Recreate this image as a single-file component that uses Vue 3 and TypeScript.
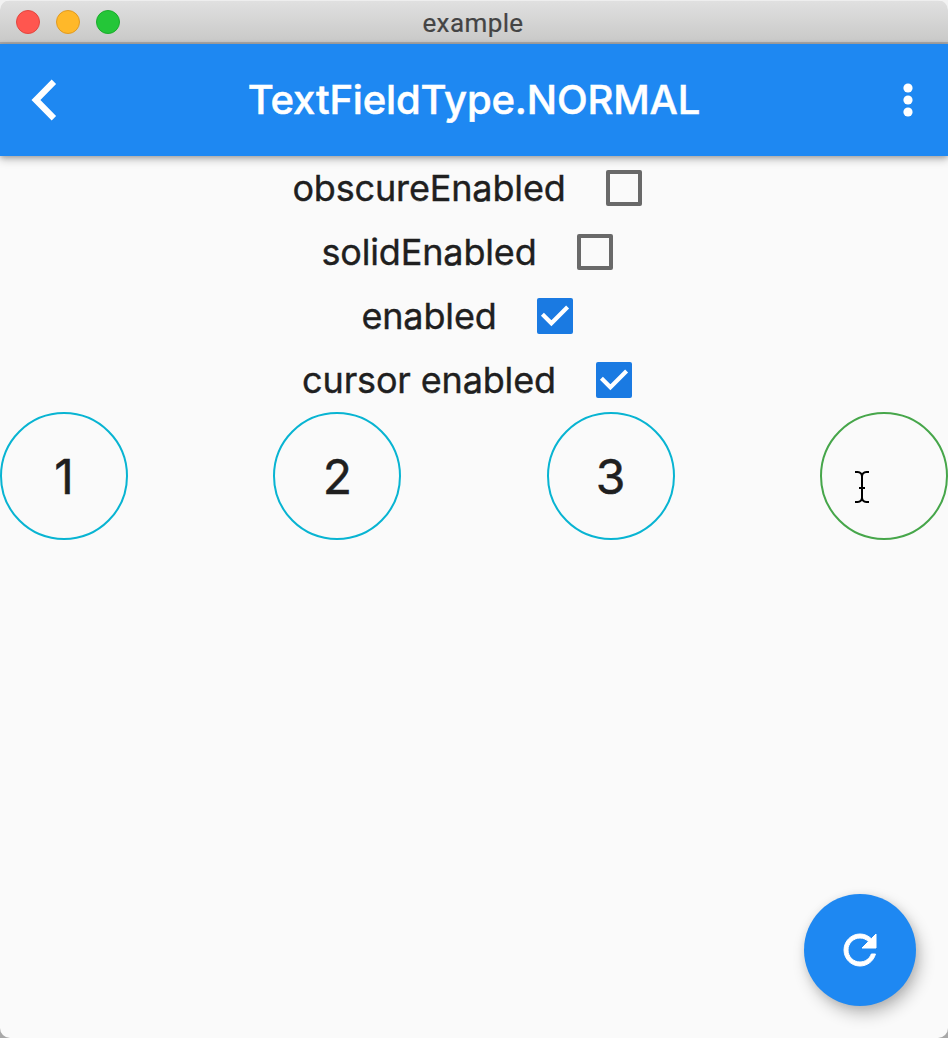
<script setup lang="ts">
import { ref } from 'vue'

interface Option {
  id: string
  label: string
  checked: boolean
}

interface PinCell {
  value: string
  active: boolean
}

const options = ref<Option[]>([
  { id: 'obscure', label: 'obscureEnabled', checked: false },
  { id: 'solid', label: 'solidEnabled', checked: false },
  { id: 'enabled', label: 'enabled', checked: true },
  { id: 'cursor', label: 'cursor enabled', checked: true },
])

const cells: PinCell[] = [
  { value: '1', active: false },
  { value: '2', active: false },
  { value: '3', active: false },
  { value: '', active: true },
]
</script>

<template>
  <div class="desktop">
    <div class="window">
      <header class="titlebar">
        <div class="lights">
          <span class="light close"></span>
          <span class="light minimize"></span>
          <span class="light zoom"></span>
        </div>
        <span class="window-title">example</span>
      </header>

      <nav class="appbar">
        <button class="icon-button" aria-label="Back">
          <svg width="48" height="48" viewBox="0 0 24 24">
            <path d="M12.05 3.95 9.85 1.75-.25 12l10.1 10.25 2.2-2.2L4.2 12z" fill="#fff" />
          </svg>
        </button>
        <h1 class="title">TextFieldType.NORMAL</h1>
        <button class="icon-button" aria-label="More">
          <svg width="48" height="48" viewBox="0 0 48 48" fill="#fff">
            <circle cx="24" cy="12" r="4.6" />
            <circle cx="24" cy="24" r="4.6" />
            <circle cx="24" cy="36" r="4.6" />
          </svg>
        </button>
      </nav>

      <main class="content">
        <div v-for="option in options" :key="option.id" class="option">
          <span class="label">{{ option.label }}</span>
          <button
            class="checkbox"
            :class="{ checked: option.checked }"
            role="checkbox"
            :aria-checked="option.checked"
            @click="option.checked = !option.checked"
          >
            <svg v-if="option.checked" width="36" height="36" viewBox="0 0 36 36">
              <path d="M5.4 16.2 14.4 25.2 30.6 9" fill="none" stroke="#fff" stroke-width="4.2" />
            </svg>
          </button>
        </div>

        <div class="cells">
          <div v-for="(cell, i) in cells" :key="i" class="cell" :class="{ active: cell.active }">
            {{ cell.value }}
            <svg v-if="cell.active" class="ibeam" width="16" height="34" viewBox="0 0 16 34">
              <path
                d="M1 2H3.5Q8 2.5 8 6.5Q8 2.5 12.5 2H15M8 5V29M1 32H3.5Q8 31.5 8 27.5Q8 31.5 12.5 32H15M5 18H11"
                fill="none"
                stroke="#000"
                stroke-width="2"
              />
            </svg>
          </div>
        </div>
      </main>

      <button class="fab" aria-label="Refresh">
        <svg width="48" height="48" viewBox="0 0 24 24">
          <path
            d="M17.65 6.35C16.2 4.9 14.21 4 12 4c-4.42 0-7.99 3.58-7.99 8s3.57 8 7.99 8c3.73 0 6.84-2.55 7.73-6h-2.08c-.82 2.33-3.04 4-5.65 4-3.31 0-6-2.69-6-6s2.69-6 6-6c1.66 0 3.14.69 4.22 1.78L13 11h7V4l-2.35 2.35z"
            fill="#fff"
            stroke="#fff"
            stroke-width="0.5"
          />
        </svg>
      </button>
    </div>
  </div>
</template>

<style>
body {
  margin: 0;
}
</style>

<style scoped>
.desktop {
  width: 948px;
  height: 1038px;
  background: linear-gradient(#f2f2f2 50%, #a8a8a8 50%);
  font-family: Inter, 'Liberation Sans', sans-serif;
}

.window {
  position: relative;
  display: flex;
  flex-direction: column;
  height: 100%;
  overflow: hidden;
  border-radius: 10px;
  background: #fafafa;
}

button {
  padding: 0;
  border: 0;
  background: none;
}

svg {
  display: block;
  overflow: visible;
}

.titlebar {
  display: grid;
  grid-template-columns: 1fr auto 1fr;
  align-items: center;
  box-sizing: border-box;
  height: 44px;
  padding: 0 16px;
  border-top: 1px solid #eeeeee;
  border-bottom: 2px solid #aaa9a9;
  background: linear-gradient(#e0e0e0, #c9c9c8);
}

.lights {
  display: flex;
  gap: 16px;
  padding-top: 1px;
}

.light {
  box-sizing: border-box;
  width: 24px;
  height: 24px;
  border: 1px solid;
  border-radius: 50%;
}

.close {
  border-color: #e2463f;
  background: #ff564f;
}

.minimize {
  border-color: #e09a22;
  background: #ffb829;
}

.zoom {
  border-color: #1bac2c;
  background: #24c638;
}

.window-title {
  margin-left: -2px;
  padding-top: 2px;
  color: #444;
  font-family: Roboto, sans-serif;
  font-size: 26px;
  line-height: 30px;
  letter-spacing: 0.4px;
  -webkit-text-stroke: 0.2px #444;
}

.appbar {
  position: relative;
  display: flex;
  align-items: center;
  justify-content: space-between;
  box-sizing: border-box;
  height: 112px;
  padding: 0 16px 0 32px;
  background: #1e88f2;
  box-shadow: 0 4px 8px rgba(0, 0, 0, 0.22), 0 1px 5px rgba(0, 0, 0, 0.22);
}

.title {
  margin: 0 0 0 -16px;
  color: #fff;
  font-size: 40px;
  font-weight: 500;
  line-height: 48px;
  letter-spacing: -0.15px;
  white-space: nowrap;
  -webkit-text-stroke: 0.5px #fff;
}

.content {
  flex: 1;
}

.option {
  display: flex;
  align-items: center;
  justify-content: center;
  height: 64px;
  padding-right: 14px;
}

.label {
  margin-right: 40px;
  color: #1f1f1f;
  font-size: 36px;
  line-height: 44px;
  letter-spacing: -0.15px;
  white-space: nowrap;
  -webkit-text-stroke: 0.4px #1f1f1f;
}

.checkbox {
  box-sizing: border-box;
  width: 36px;
  height: 36px;
  border: 4px solid #696969;
  border-radius: 2px;
}

.checkbox.checked {
  border: 0;
  background: #1a7ae2;
}

.cells {
  display: flex;
  justify-content: space-between;
}

.cell {
  position: relative;
  display: flex;
  align-items: center;
  justify-content: center;
  box-sizing: border-box;
  width: 128px;
  height: 128px;
  padding-top: 2px;
  border: 2px solid #08b4d2;
  border-radius: 50%;
  color: #1f1f1f;
  font-size: 48px;
  line-height: 56px;
  -webkit-text-stroke: 0.5px #1f1f1f;
}

.cell.active {
  border-color: #46a64a;
}

.ibeam {
  position: absolute;
  top: 56px;
  left: 32px;
}

.fab {
  position: absolute;
  right: 32px;
  bottom: 32px;
  display: flex;
  align-items: center;
  justify-content: center;
  width: 112px;
  height: 112px;
  border-radius: 50%;
  background: #1e88f2;
  box-shadow: 4px 8px 16px rgba(0, 0, 0, 0.24), 1px 2px 8px rgba(0, 0, 0, 0.1);
}
</style>
